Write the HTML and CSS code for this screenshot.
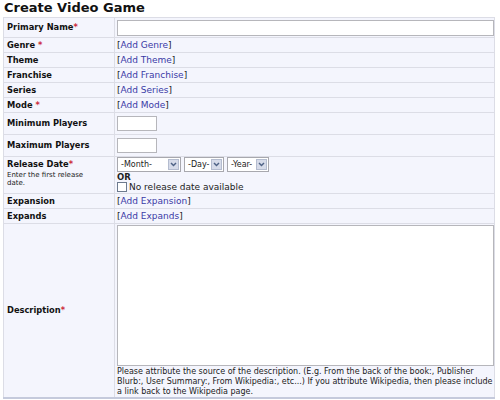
FILE: index.html
```html
<!DOCTYPE html>
<html>
<head>
<meta charset="utf-8">
<link rel="stylesheet" href="styles.css">
</head>
<body>
<h1 class="title">Create Video Game</h1>
<table class="form">
  <colgroup><col class="c-label"><col class="c-field"></colgroup>
  <tr class="r-input">
    <th>Primary Name<span class="req">*</span></th>
    <td><span class="text wide"></span></td>
  </tr>
  <tr>
    <th>Genre <span class="req">*</span></th>
    <td>[<a href="#">Add Genre</a>]</td>
  </tr>
  <tr>
    <th>Theme</th>
    <td>[<a href="#">Add Theme</a>]</td>
  </tr>
  <tr>
    <th>Franchise</th>
    <td>[<a href="#">Add Franchise</a>]</td>
  </tr>
  <tr>
    <th>Series</th>
    <td>[<a href="#">Add Series</a>]</td>
  </tr>
  <tr>
    <th>Mode <span class="req">*</span></th>
    <td>[<a href="#">Add Mode</a>]</td>
  </tr>
  <tr class="r-small">
    <th>Minimum Players</th>
    <td><span class="text small"></span></td>
  </tr>
  <tr class="r-small">
    <th>Maximum Players</th>
    <td><span class="text small"></span></td>
  </tr>
  <tr class="r-date">
    <th>Release Date<span class="req">*</span><div class="hint">Enter the first release date.</div></th>
    <td>
      <div class="selects">
        <span class="sel month"><span class="val">-Month-</span><span class="btn"><svg width="9" height="7" viewBox="0 0 9 7"><path d="M1 1.5 L4.5 5 L8 1.5" fill="none" stroke="#4d6185" stroke-width="2"/></svg></span></span>
        <span class="sel day"><span class="val">-Day-</span><span class="btn"><svg width="9" height="7" viewBox="0 0 9 7"><path d="M1 1.5 L4.5 5 L8 1.5" fill="none" stroke="#4d6185" stroke-width="2"/></svg></span></span>
        <span class="sel year"><span class="val">-Year-</span><span class="btn"><svg width="9" height="7" viewBox="0 0 9 7"><path d="M1 1.5 L4.5 5 L8 1.5" fill="none" stroke="#4d6185" stroke-width="2"/></svg></span></span>
      </div>
      <div class="or">OR</div>
      <div class="nodate"><span class="cb"></span>No release date available</div>
    </td>
  </tr>
  <tr>
    <th>Expansion</th>
    <td>[<a href="#">Add Expansion</a>]</td>
  </tr>
  <tr>
    <th>Expands</th>
    <td>[<a href="#">Add Expands</a>]</td>
  </tr>
  <tr class="r-desc">
    <th>Description<span class="req">*</span></th>
    <td>
      <div class="area"></div>
      <div class="note">Please attribute the source of the description. (E.g. From the back of the book:, Publisher Blurb:, User Summary:, From Wikipedia:, etc...) If you attribute Wikipedia, then please include a link back to the Wikipedia page.</div>
    </td>
  </tr>
</table>
</body>
</html>
```
FILE: styles.css
```css
html, body {
  margin: 0;
  padding: 0;
  background: #ffffff;
}
body {
  font-family: "DejaVu Sans", Verdana, sans-serif;
  font-size: 9px;
  color: #000;
}
.title {
  margin: 0;
  padding: 1px 0 0 4px;
  height: 16px;
  font-size: 13px;
  font-weight: bold;
  line-height: 14px;
  color: #111;
}
.form {
  margin-left: 3px;
  width: 492px;
  table-layout: fixed;
  border-collapse: collapse;
  background: #f4f5fd;
  border: 1px solid #dcdde6;
  border-bottom: 2px solid #c5cadc;
}
.c-label { width: 111px; }
.form th, .form td {
  border-top: 1px solid #dcdde6;
  border-bottom: 1px solid #dcdde6;
  height: 14px;
  padding: 0 0 0 3px;
  vertical-align: middle;
  line-height: 13px;
}
.form th {
  text-align: left;
  font-weight: bold;
  border-right: 1px solid #dcdde6;
  font-size: 8.3px;
  color: #111;
}
.form td {
  padding-left: 2px;
  font-size: 9px;
  color: #222;
}
a {
  color: #3a3aa6;
  text-decoration: none;
}
.req {
  color: #cc2a3a;
}
.text {
  display: block;
  background: #fff;
  border: 1px solid #b6b6bb;
  box-sizing: border-box;
}
.r-input th, .r-input td { height: 19px; }
.text.wide { width: 377px; height: 16px; }
.r-small th, .r-small td { height: 21px; }
.text.small { width: 40px; height: 15px; }
.r-date th, .r-date td { height: 35px; vertical-align: top; padding-top: 0; }
.r-date th { padding-top: 1px; }
.hint {
  width: 90px;
  font-size: 7px;
  font-weight: normal;
  line-height: 8px;
  color: #222;
}
.selects {
  display: flex;
  gap: 3px;
  height: 15px;
}
.sel {
  display: flex;
  align-items: center;
  background: #fff;
  border: 1px solid #a8a8ae;
  box-sizing: border-box;
  height: 15px;
  font-size: 8px;
  color: #222;
  padding: 1px;
}
.sel .val { flex: 1; padding-left: 2px; }
.sel .btn {
  width: 11px;
  height: 11px;
  background: #d6dbe9;
  border: 1px solid #b4bccf;
  box-sizing: border-box;
  display: flex;
  align-items: center;
  justify-content: center;
}
.sel .btn svg { width: 7px; height: 5px; }
.month { width: 64px; }
.day { width: 40px; }
.year { width: 42px; }
.or {
  font-weight: bold;
  font-size: 8.5px;
  line-height: 10px;
}
.nodate {
  display: flex;
  align-items: center;
  font-size: 9px;
  line-height: 10px;
}
.cb {
  width: 10px;
  height: 10px;
  border: 1px solid #6d7a8e;
  box-sizing: border-box;
  background: #fff;
  margin-right: 2px;
}
.r-desc th, .r-desc td { height: 170px; }
.r-desc td { vertical-align: top; padding-top: 1px; }
.area {
  width: 377px;
  height: 141px;
  background: #fff;
  border: 1px solid #b6b6bb;
  box-sizing: border-box;
}
.note {
  width: 377px;
  font-size: 8px;
  line-height: 10px;
  color: #222;
  padding-top: 1px;
}
```
